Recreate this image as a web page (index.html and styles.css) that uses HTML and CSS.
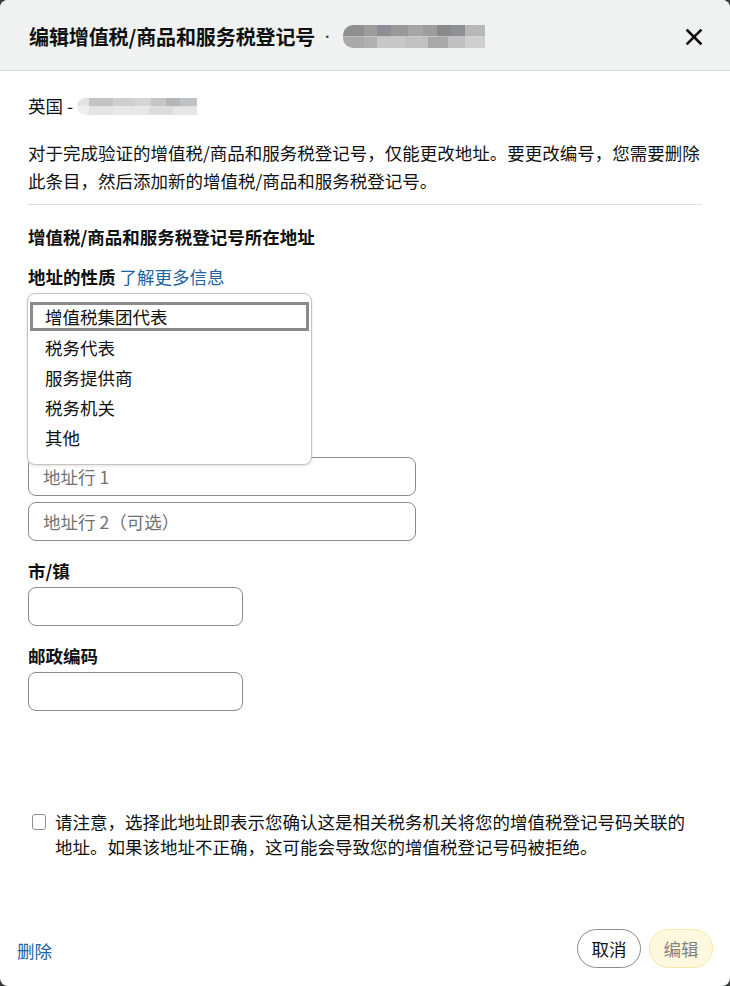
FILE: index.html
```html
<!DOCTYPE html>
<html lang="zh-CN">
<head>
<meta charset="utf-8">
<title>编辑增值税/商品和服务税登记号</title>
<link rel="stylesheet" href="styles.css">
</head>
<body>
<div class="modal">
  <div class="header">
    <h1 class="title">编辑增值税/商品和服务税登记号<span class="dot">·</span><span class="redact redact-title"></span></h1>
    <button class="close" aria-label="关闭">
      <svg width="18" height="18" viewBox="0 0 18 18"><path d="M2.5 2.5 L15.5 15.5 M15.5 2.5 L2.5 15.5" stroke="#0f1111" stroke-width="2.6" stroke-linecap="square" fill="none"/></svg>
    </button>
  </div>
  <div class="body">
    <div class="country">英国 -<span class="redact redact-country"></span></div>
    <p class="para">对于完成验证的增值税/商品和服务税登记号，仅能更改地址。要更改编号，您需要删除此条目，然后添加新的增值税/商品和服务税登记号。</p>
    <hr class="divider">
    <div class="section-title">增值税/商品和服务税登记号所在地址</div>
    <div class="label">地址的性质 <a class="link" href="#">了解更多信息</a></div>
    <div class="select-area">
      <ul class="listbox">
        <li class="option focused">增值税集团代表</li>
        <li class="option">税务代表</li>
        <li class="option">服务提供商</li>
        <li class="option">税务机关</li>
        <li class="option">其他</li>
      </ul>
    </div>
    <div class="input wide"><span class="ph">地址行 1</span></div>
    <div class="input wide second"><span class="ph">地址行 2（可选）</span></div>
    <div class="label field-label">市/镇</div>
    <div class="input narrow"></div>
    <div class="label field-label">邮政编码</div>
    <div class="input narrow"></div>
    <label class="confirm">
      <span class="checkbox"></span>
      <span class="confirm-text">请注意，选择此地址即表示您确认这是相关税务机关将您的增值税登记号码关联的地址。如果该地址不正确，这可能会导致您的增值税登记号码被拒绝。</span>
    </label>
  </div>
  <div class="footer">
    <a class="link delete" href="#">删除</a>
    <div class="buttons">
      <button class="btn cancel">取消</button>
      <button class="btn edit">编辑</button>
    </div>
  </div>
</div>
</body>
</html>
```

FILE: styles.css
```css
* { box-sizing: border-box; }
html, body { margin: 0; padding: 0; }
body {
  background: #3a3d3d;
  font-family: "Noto Sans CJK SC", "Noto Sans", sans-serif;
  color: #0f1111;
  font-size: 17.5px;
}
.modal {
  width: 730px;
  height: 986px;
  background: #fff;
  border-radius: 8px;
  overflow: hidden;
  display: flex;
  flex-direction: column;
}
.header {
  height: 71px;
  flex: none;
  background: #f0f2f2;
  border-bottom: 1px solid #d5d9d9;
  display: flex;
  align-items: center;
  justify-content: space-between;
  padding: 3px 24px 0 29px;
}
.title {
  margin: 0;
  font-size: 20px;
  font-weight: 700;
  line-height: 28px;
  display: flex;
  align-items: center;
  letter-spacing: -0.1px;
}
.dot {
  margin: 0 10px 0 6px;
  font-weight: 400;
  font-size: 12px;
  color: #444;
}
.redact {
  display: inline-block;
  filter: blur(0.6px);
}
.redact-title {
  width: 142px;
  height: 23px;
  border-radius: 10px 0 0 10px;
  background:
    linear-gradient(to right, #8f8f8f 0 15%, #9c9c9c 15% 24%, #8c8f94 24% 34%, #999 34% 46%, #a6a6a6 46% 56%, #9d9d9d 56% 66%, #8a8a8a 66% 76%, #8e9094 76% 86%, #b8b8b8 86% 100%) top / 100% 50% no-repeat,
    linear-gradient(to right, #a9a9a9 0 15%, #b0b0b0 15% 24%, #c8c8c8 24% 44%, #c2c2c2 44% 60%, #a9a9a9 60% 74%, #c0c0c0 74% 86%, #cfcfcf 86% 100%) bottom / 100% 50% no-repeat;
}
.redact-country {
  width: 120px;
  height: 17px;
  margin-left: 4px;
  vertical-align: -2px;
  border-radius: 9px 0 0 9px;
  background:
    linear-gradient(to right, #e3e3e3 0 10%, #c4c4c4 10% 30%, #cfcfcf 30% 48%, #d5d5d5 48% 62%, #c6c6c6 62% 74%, #b6b6b6 74% 86%, #c0c3c6 86% 100%) top / 100% 50% no-repeat,
    linear-gradient(to right, #eeeeee 0 10%, #e4e4e4 10% 30%, #e8e8e8 30% 60%, #dcdcdc 60% 80%, #e6e6e6 80% 100%) bottom / 100% 50% no-repeat;
}
.close {
  background: none;
  border: 0;
  padding: 0;
  width: 24px;
  height: 24px;
  display: flex;
  align-items: center;
  justify-content: center;
  cursor: pointer;
}
.body {
  flex: 1;
  padding: 21px 28px 0 28px;
}
.country { line-height: 28px; }
.para {
  margin: 19px 0 0 0;
  line-height: 28px;
}
.divider {
  border: 0;
  border-top: 1px solid #dcdfdf;
  margin: 9px 0 0 0;
}
.section-title {
  margin-top: 18px;
  font-weight: 700;
  line-height: 28px;
}
.label {
  margin-top: 12px;
  font-weight: 700;
  line-height: 28px;
}
.link {
  color: #2162a1;
  font-weight: 400;
  text-decoration: none;
}
.select-area {
  position: relative;
  margin-top: 2px;
  height: 164px;
}
.listbox {
  position: absolute;
  left: -1px;
  top: 0;
  width: 285px;
  margin: 0;
  padding: 8px 2px 11px 2px;
  list-style: none;
  background: #fff;
  border: 1px solid #c4c4c4;
  border-radius: 8px;
  box-shadow: 0 1px 3px rgba(0,0,0,0.12);
  z-index: 2;
}
.option {
  height: 30px;
  line-height: 30px;
  padding-left: 15px;
}
.option.focused {
  outline: 3px solid #8a8a8a;
  outline-offset: -3px;
  height: 29px;
  line-height: 29px;
  margin-bottom: 2px;
}
.input {
  height: 39px;
  border: 1px solid #888c8c;
  border-radius: 8px;
  background: #fff;
  padding-left: 14px;
  display: flex;
  align-items: center;
}
.input.wide { width: 388px; }
.input.second { margin-top: 6px; }
.input.narrow { width: 215px; margin-top: 2px; }
.field-label { margin-top: 16px; }
.ph { color: #6f7373; }
.confirm {
  display: flex;
  align-items: flex-start;
  margin-top: 98px;
  padding-left: 4px;
  gap: 9px;
}
.checkbox {
  flex: none;
  width: 14px;
  height: 16px;
  margin-top: 5px;
  border: 1px solid #8d9096;
  border-radius: 3px;
  background: #fff;
}
.confirm-text {
  line-height: 25px;
  width: 640px;
}
.footer {
  flex: none;
  display: flex;
  justify-content: space-between;
  align-items: center;
  padding: 0 17px 18px 17px;
}
.delete { padding-top: 4px; }
.buttons { display: flex; gap: 8px; }
.btn {
  height: 39px;
  width: 64px;
  border-radius: 20px;
  font-family: inherit;
  font-size: 17.5px;
  padding: 0;
  line-height: 37px;
}
.cancel {
  background: #fff;
  border: 1px solid #888c8c;
  color: #0f1111;
}
.edit {
  background: #fef8de;
  border: 1px solid #fbe7a5;
  color: #7f8484;
}
```
